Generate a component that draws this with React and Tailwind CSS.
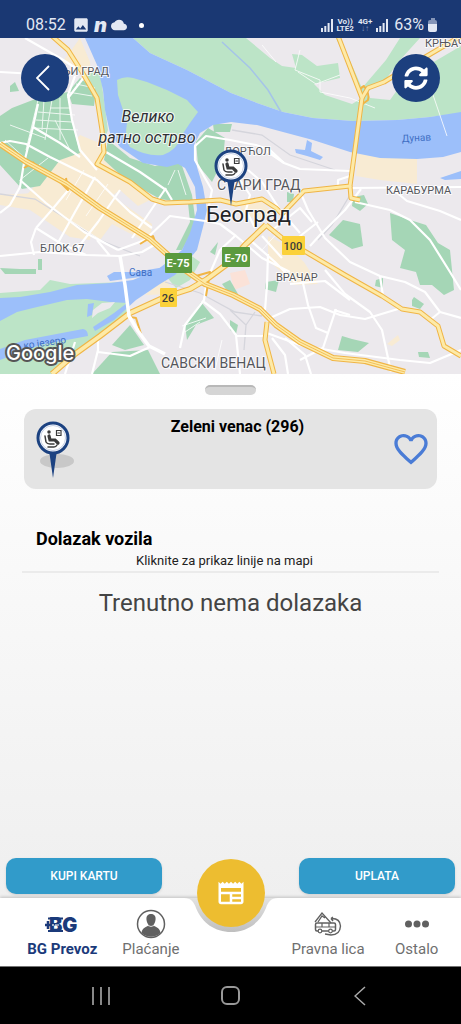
import React, { useState } from "react";
import { FaSyncAlt } from "react-icons/fa";
import { MdCloud, MdFavorite, MdFavoriteBorder, MdImage, MdNewspaper } from "react-icons/md";

const streets = [
  "M38 104 L33 127 L24 163 L20 187 L10 205 L0 213 M75 76 L68 95 L72 120 L80 150 L97 170",
  "M0 72 L35 74 M25 38 L60 58 L82 72 M85 76 L68 98",
  "M0 143 L10 141 L26 144 L50 157 L97 180 L130 212 L152 228",
  "M20 180 L46 203 L84 232 L118 250 M33 127 L60 143 L80 157",
  "M106 152 L140 172 L166 190 L172 200 M166 188 L147 216 L132 238 M118 250 L145 240 L170 216 L205 221",
  "M95 177 L75 212 L54 250 M120 190 L98 222 L76 250 M70 188 L50 212 L36 228 M36 228 L31 242 L34 255",
  "M0 256 L40 252 L86 255 L120 256 L142 252 L156 244 M36 228 L60 243 L86 255 M97 240 L110 256",
  "M98 336 L98 352 L130 356 L150 347 M98 350 L92 374 M75 342 L65 374",
  "M180 348 L185 325 L204 300 L207 280 L220 250 L235 236 M204 302 L220 314 L236 335 L240 374",
  "M209 205 L212 190 L205 178 L195 160 L195 146 L206 136 L230 140 L256 145 L270 150 L284 163 L300 169 L350 171",
  "M248 170 L262 182 L280 210 L300 233 M265 150 L284 163",
  "M302 196 L308 210 L325 238 L350 262 L380 276",
  "M361 189 L345 210 L320 235 L310 246 M338 188 L338 180 L350 176",
  "M240 180 L250 195 L246 210 L255 228 M270 232 L300 208 L312 222 M290 244 L318 222",
  "M205 221 L220 224 L236 236 L262 258 L290 272 M250 240 L275 262 L295 282 M262 236 L282 258",
  "M355 202 L390 210 L410 220 L430 240 L450 272 L461 290",
  "M350 188 L461 187 M390 187 L407 201 L440 211 L461 220",
  "M268 254 L267 285 L265 310 M380 276 L383 296 M380 276 L405 282 L425 292 L440 312 L461 318",
  "M440 312 L430 320 M325 270 L345 294 L370 312 L382 330 L391 372",
  "M270 318 L290 309 L320 307 L340 315 L365 319 L398 309",
  "M303 283 L308 305 L316 328 L328 333 M336 309 L323 348 L300 360 M334 310 L350 315",
  "M264 332 L300 345 L345 353 L400 360 L430 363 L461 350",
  "M272 338 L285 355 L288 374 M285 338 L305 355 L311 374 M236 336 L264 336",
  "M290 284 L325 281 L350 300",
];

const alleys = [
  "M10 125 L45 138 M5 140 L38 170 M38 100 L26 150 M52 100 L45 140 M60 98 L60 140 M38 112 L75 115 M33 128 L78 130",
  "M44 100 L42 130 M68 92 L92 96 M76 84 L95 88 M50 108 L70 108 M36 120 L72 122",
  "M55 120 L70 150 M48 158 L20 180 M300 50 L295 70 L320 80 L320 92 L350 98 M350 98 L375 108",
  "M298 72 L316 84 L340 75 M262 45 L276 62 M84 170 L66 200 M108 184 L86 216",
  "M62 215 L110 246 M78 194 L136 232 M430 86 L447 136 M175 170 L168 185 M178 170 L186 195",
  "M182 326 L206 318 M185 332 L200 322 M222 340 L215 370 M280 230 L262 250",
];

const bridge = "M120 256 L125 285 L129 316 L138 331 L149 346 L165 354";

const highways = [
  "M0 144 L25 161 L67 184 L100 208 L150 239 L185 270 L205 284 L233 295 L260 309 L276 325 L300 342 L333 358 L365 361 L405 372",
  "M52 374 L75 354 L100 336 L130 313 L165 297 L190 289 L207 279 L230 262 L245 245 L266 225",
];

const mainRoads = [
  "M52 36 L68 50 L82 72 L97 98 L102 130 L104 152 L97 164 L130 182 L152 199 L165 203 L190 202 L220 200 L236 204 L262 199 L276 208 L282 214",
  "M282 214 L304 191 L350 186 L362 98 L338 36",
  "M362 98 L368 88 L384 82 L410 66 L461 36",
  "M350 186 L351 198 L360 200",
  "M266 225 L282 238 L306 252 L345 275 L382 296 L402 309 L420 312 L438 326 L444 346 L461 356",
  "M267 322 L265 340 L274 374",
];

const parks = [
  "M0 116 L12 108 L38 98 L68 92 L74 130 L80 153 L60 160 L40 186 L22 189 L0 165Z",
  "M68 92 L80 78 L96 90 L94 106 L72 104Z",
  "M108 140 L130 158 L155 166 L180 160 L192 195 L196 225 L182 250 L176 250 L190 222 L188 203 L160 199 L126 180 L104 160Z",
  "M196 142 L208 128 L225 138 L223 160 L212 182 L198 165Z",
  "M213 124 L232 124 L230 132 L214 132Z",
  "M353 197 L364 195 L368 204 L360 211 L352 206Z",
  "M329 235 L343 220 L360 224 L363 246 L352 249Z",
  "M390 213 L410 220 L426 225 L438 243 L450 250 L454 290 L444 295 L432 285 L420 285 L416 272 L400 268 L405 250 L392 240Z",
  "M338 350 L342 336 L352 339 L369 343 L358 352Z",
  "M412 300 L414 297 L424 304 L420 309 L412 306Z",
  "M112 345 L130 325 L144 345 L125 350Z",
  "M112 352 L148 350 L160 374 L92 374Z",
  "M185 325 L201 302 L214 318 L196 325 L187 340Z",
  "M266 282 L279 280 L276 292 L265 289Z",
  "M287 192 L294 194 L293 202 L287 202Z",
  "M418 352 L428 352 L430 358 L419 357Z",
  "M376 280 L383 278 L383 288 L375 286Z",
  "M0 268 L20 269 L36 269 L36 274 L5 274Z",
  "M38 259 L42 259 L42 270 L38 270Z",
  "M10 86 L15 82 L19 91 L10 92Z",
  "M210 252 L218 242 L215 255Z",
  "M222 284 L230 280 L238 294 L228 292Z",
  "M230 320 L238 325 L236 334 L230 330Z",
];

const PinShape = () => (
  <>
    <path d="M-4 12 L4 12 L0 40Z" fill="#1c4281" />
    <circle r="15" fill="#fff" stroke="#1c4281" strokeWidth="3" />
    <circle r="12.500" fill="#fff" stroke="#c5d0e6" strokeWidth="1" />
    <g fill="none" stroke="#3b3b3b" strokeWidth="2" strokeLinecap="round">
      <circle cx="-4" cy="-6" r="1" fill="#3b3b3b" strokeWidth="1.500" />
      <path d="M-4 -2 L-3 2 L2 2 L5 5" strokeWidth="3.200" />
      <path d="M-8 -2 L-7 4 Q-6 6 -3 6 L1 6" strokeWidth="1.500" />
      <path d="M-5 9 L1 9 Q3 9 4 7" strokeWidth="1.500" />
      <path d="M3.500 -7.500 H8 V-2.500 H3.500Z M5 -5 H6.500" strokeWidth="1.200" />
    </g>
  </>
);

const CityMap = () => (
  <svg
    viewBox="0 38 461 336"
    className="block w-full font-[Roboto,sans-serif]"
    role="img"
    aria-label="Mapa Beograda"
  >
    <rect y="38" width="461" height="336" fill="#ece9ed" />

    {/* Built-up districts */}
    <g fill="#f8ebd3">
      <path d="M80 135 L104 145 L104 160 L150 200 L138 206 L120 190 L112 196 L152 224 L150 244 L112 224 L100 240 L70 225 L50 212 L22 200 L40 180 L62 155Z" />
      <path d="M80 38 L90 62 L92 85 L84 70 L62 62 L70 52Z" />
      <path d="M118 177 L130 170 L139 186 L136 192Z" />
      <path d="M358 154 L417 158 L417 184 L380 180 L356 176Z" />
      <path d="M0 195 L35 193 L75 218 L92 228 L90 240 L70 237 L30 210 L0 205Z" />
      <path d="M240 203 L258 198 L272 212 L260 220 L242 214Z M268 236 L284 244 L304 262 L318 284 L295 285 L268 260Z" />
      <path d="M387 344 L398 335 L400 340 L392 346Z M145 295 L165 278 L175 294Z" />
      <path d="M230 273 L245 270 L250 284 L234 290Z" fill="#fbe2d8" />
    </g>

    {/* River banks and the Danube side */}
    <g fill="#bce4c7">
      <path d="M133 38 H461 V113 L430 117 L397 120 L353 121 L313 118 L283 112 L257 103 L231 93 L187 70 L150 53Z" />
      <path d="M0 293 L40 290 L50 280 L70 284 L126 282 L129 312 L90 340 L52 374 L0 374Z" />
      <path d="M85 75 L100 70 L108 130 L104 140 L98 98Z" />
      <path d="M165 275 L186 252 L200 262 L190 280 L176 288Z" />
    </g>
    <path
      d="M246 38 L336 38 L352 75 L362 98 L352 104 L325 95 L314 84 L340 78 L338 63 L317 66 L302 55 L292 54 L296 68 L282 66 L270 58Z M340 38 L400 38 L386 60 L362 88Z M420 38 L461 38 L461 46 L420 70 L400 86 L390 100 L370 98 L366 90 L384 82 L400 60Z"
      fill="#ece9ed"
    />
    {parks.map((d) => (
      <path key={d} d={d} fill="#a5d6b6" />
    ))}

    {/* Rivers */}
    <g fill="#9cbffa">
      <path d="M85 38 L133 38 L150 53 L187 70 L231 93 L257 103 L283 112 L313 118 L353 121 L397 120 L430 117 L461 112 V152 L443 157 L417 159 L380 158 L350 152 L313 140 L283 132 L257 125 L231 122 L213 125 L200 133 L194 145 L197 167 L203 187 L207 210 L203 227 L197 250 L187 262 L175 275 L160 284 L136 300 L114 320 L95 331 L93 327 L114 313 L127 303 L110 302 L87 299 L67 300 L33 308 L17 312 L0 321 V298 L20 297 L50 292 L77 285 L110 283 L133 280 L157 270 L170 260 L182 250 L190 233 L197 210 L195 187 L185 168 L178 164 L167 167 L143 163 L120 147 L110 133 L105 110 L103 90 L97 65Z" />
      <path d="M0 349 L25 340 L83 329 Q88 330 88 336 L40 345 L0 360Z" />
      <path d="M107 276 L114 272 L135 272 L165 267 L165 274 L140 277 L110 281Z" />
      <path d="M295 149 L305 150 L307 140 L312 143 L311 151 L323 157 L320 160 L307 156 L296 153Z" />
      <path d="M440 178 L455 173 L461 171 V179 L445 180Z M88 304 L94 303 L92 315 L87 317Z" />
    </g>
    <path
      d="M117 80 Q124 76 133 78 L147 82 L167 90 L187 100 L198 112 L190 123 L180 138 Q177 150 163 155 Q147 157 130 147 Q124 139 127 123 L123 110 L118 95Z"
      fill="#bce4c7"
    />
    <path d="M93 310 L102 303 L115 302 L110 308 L98 313 L92 318Z" fill="#ece9ed" />
    <path d="M222 42 L250 68 L268 90 L281 112" fill="none" stroke="#a5c4e8" strokeWidth="1.500" />

    {/* Railways and side streets */}
    <g fill="none" stroke="#d5d5dc" strokeWidth="1.300">
      <path d="M0 194 L35 199 L100 240 L140 256 M232 130 L262 135 L290 155 L335 170 M350 195 L332 225 L318 240" />
      <path d="M165 282 L200 293 L235 312 L262 316 M230 310 L246 325 L244 350 M246 325 L255 312" />
    </g>
    <g fill="none" stroke="#fff" strokeWidth="1" opacity="0.800">
      {alleys.map((d) => (
        <path key={d} d={d} />
      ))}
    </g>
    <g fill="none" stroke="#fff" strokeWidth="2.200" strokeLinejoin="round">
      {streets.map((d) => (
        <path key={d} d={d} />
      ))}
    </g>

    {/* Main roads */}
    <g fill="none" strokeLinejoin="round">
      <g stroke="#f0b545">
        {mainRoads.map((d) => (
          <path key={d} d={d} strokeWidth="5" />
        ))}
        {highways.map((d) => (
          <path key={d} d={d} strokeWidth="6" />
        ))}
        <path d="M362 98 Q356 90 364 86 Q370 94 368 100 L360 106" strokeWidth="2" />
        <path d="M58 180 L68 190 L66 178 M24 168 L34 162 M140 244 L153 236 L156 244" strokeWidth="2" />
        <path d="M125 316 L136 318 L141 334 M196 276 L210 272 L206 296" strokeWidth="2" />
      </g>
      <g stroke="#fdeaa8">
        {mainRoads.map((d) => (
          <path key={d} d={d} strokeWidth="3" />
        ))}
        {highways.map((d) => (
          <path key={d} d={d} strokeWidth="3.800" />
        ))}
      </g>
      <path d={highways[0]} stroke="#f0b545" strokeWidth="0.800" />
      <path d={bridge} stroke="#fff" strokeWidth="3.500" />
    </g>

    {/* Road shields */}
    <g fontSize="12" fontWeight="700" textAnchor="middle">
      <rect x="165" y="253" width="27" height="20" rx="1" fill="#5b9a3f" />
      <text x="178" y="267" fill="#fff" fontSize="11">E-75</text>
      <rect x="222" y="247" width="28" height="20" rx="1" fill="#5b9a3f" />
      <text x="236" y="262" fill="#fff" fontSize="11">E-70</text>
      <rect x="282" y="236" width="23" height="19" rx="1" fill="#fbd13a" />
      <text x="293" y="250" fill="#3c3c3c" fontSize="11" fontWeight="500">100</text>
      <rect x="160" y="288" width="17" height="19" rx="1" fill="#fbd13a" />
      <text x="168" y="302" fill="#3c3c3c" fontSize="11" fontWeight="500">26</text>
    </g>

    {/* Place names */}
    <g
      fill="#55565b"
      stroke="#fff"
      strokeWidth="2"
      strokeOpacity="0.800"
      strokeLinejoin="round"
      paintOrder="stroke"
      fontSize="11"
    >
      <text x="109" y="75" textAnchor="end">ГОРЊИ ГРАД</text>
      <text x="425" y="47">КРЊАЧ</text>
      <text x="224" y="155">ДОРЋОЛ</text>
      <text x="386" y="194">КАРАБУРМА</text>
      <text x="40" y="252">БЛОК 67</text>
      <text x="276" y="281">ВРАЧАР</text>
      <text x="217" y="190" fontSize="14">СТАРИ ГРАД</text>
      <text x="161" y="368" fontSize="14">САВСКИ ВЕНАЦ</text>
      <g fill="#2f3034" fontSize="16" fontStyle="italic" textAnchor="middle">
        <text x="148" y="122">Велико</text>
        <text x="147" y="143">ратно острво</text>
      </g>
      <text x="206" y="222" fontSize="22" fill="#242528">Београд</text>
    </g>
    <g fill="#3f6fc4" fontSize="10">
      <text x="402" y="142" transform="rotate(-3 402 142)">Дунав</text>
      <text x="129" y="276">Сава</text>
      <text x="24" y="349" transform="rotate(-8 24 349)">ко језеро</text>
    </g>
    <text
      x="6"
      y="360"
      fontSize="20"
      fontWeight="500"
      fontFamily="Inter, sans-serif"
      fill="#fff"
      stroke="#555"
      strokeWidth="4"
      strokeLinejoin="round"
      paintOrder="stroke"
    >
      Google
    </text>

    <g transform="translate(231 166)">
      <PinShape />
    </g>
  </svg>
);

const Signal = () => (
  <svg viewBox="0 0 12 13" className="h-[13px] w-3" aria-hidden="true">
    <path d="M1 13 V9 M4.300 13 V7 M7.600 13 V4 M11 13 V0" stroke="#e3e8f3" strokeWidth="2" />
  </svg>
);

const StatusBar = () => (
  <header className="flex h-[38px] items-center justify-between bg-[#1a3873] pl-[26px] pr-6 pt-3 text-[#e3e8f3]">
    <div className="flex items-center">
      <span className="w-[46px] text-base">08:52</span>
      <MdImage className="h-[18px] w-[18px]" />
      <span className="mx-1 font-[Inter,sans-serif] text-xl/4 font-black italic">n</span>
      <MdCloud className="h-4 w-4" />
      <span className="ml-3 h-[5px] w-[5px] rounded-full bg-white" />
    </div>
    <div className="flex items-center">
      <Signal />
      <span className="ml-[3px] flex flex-col text-center text-[8px]/[7px] font-bold">
        <span>Vo))</span>
        <span>LTE2</span>
      </span>
      <span className="mx-1 flex flex-col text-center text-[8px]/[7px] font-bold">
        <span>4G+</span>
        <span className="text-[#8092ba]">↓↑</span>
      </span>
      <Signal />
      <span className="ml-1.5 text-base">63%</span>
      <span className="ml-1 flex flex-col items-center" aria-hidden="true">
        <span className="h-0.5 w-1 bg-[#8595b8]" />
        <span className="h-1 w-[9px] rounded-t-xs bg-[#8595b8]" />
        <span className="h-2 w-[9px] rounded-b-xs bg-[#e3e8f3]" />
      </span>
    </div>
  </header>
);

const BgLogo = () => (
  <svg viewBox="0 0 34 20" className="h-5 w-[34px]" aria-hidden="true">
    <text
      x="4"
      y="18"
      fill="#1b3a7a"
      fontFamily="Inter, sans-serif"
      fontWeight="900"
      fontSize="20"
    >
      BG
    </text>
    <path d="M0 11 H7 M3 7 V15" stroke="#1b3a7a" strokeWidth="2.500" />
    <path d="M3 4.500 H18 M3 17 H18" stroke="#1b3a7a" strokeWidth="2" />
    <path d="M8 10 V12 M10 11 H14" stroke="#fff" strokeWidth="1.200" />
  </svg>
);

const UserIcon = () => (
  <svg viewBox="0 0 30 30" className="h-[30px] w-[30px]" aria-hidden="true">
    <circle cx="15" cy="15" r="13.500" fill="none" stroke="#606060" strokeWidth="1.500" />
    <path
      d="M15 5 C18.500 5 20 7.500 19.500 11 C19 14 18 15 17.500 16 C18 18 24 18 24.500 24 C19 29 11 29 5.500 24 C6 18 12 18 12.500 16 C12 15 11 14 10.500 11 C10 7.500 11.500 5 15 5Z"
      fill="#606060"
    />
    <path d="M12 16.500 Q15 18.500 18 16.500" fill="none" stroke="#fff" strokeWidth="0.800" />
  </svg>
);

const VehiclesIcon = () => (
  <svg viewBox="0 0 28 24" className="h-6 w-7" fill="none" stroke="#606060" aria-hidden="true">
    <path d="M1 10 L8 1 L17 11 M4 10 L8 4 L11 6" strokeWidth="1.300" />
    <rect x="1.500" y="11" width="20" height="8" rx="1.500" strokeWidth="1.500" />
    <path d="M2 15 H21 M8 11 V15 M15 11 V15" strokeWidth="1.200" />
    <circle cx="6" cy="19" r="1.800" fill="#fff" strokeWidth="1.200" />
    <circle cx="16.500" cy="19" r="1.800" fill="#fff" strokeWidth="1.200" />
    <path d="M17 6.500 Q26 6 26.500 14 Q26 23 17 23 L11 22 M17 6.500 L19 5 M17 6.500 L19 9" strokeWidth="1.400" />
  </svg>
);

const DotsIcon = () => (
  <svg viewBox="0 0 26 8" className="h-2 w-[26px]" fill="#606060" aria-hidden="true">
    <circle cx="4.500" cy="4" r="3.500" />
    <circle cx="13" cy="4" r="3.500" />
    <circle cx="21.500" cy="4" r="3.500" />
  </svg>
);

const tabs = [
  { id: "prevoz", label: "BG Prevoz", icon: BgLogo },
  { id: "placanje", label: "Plaćanje", icon: UserIcon },
  { id: "pravna", label: "Pravna lica", icon: VehiclesIcon },
  { id: "ostalo", label: "Ostalo", icon: DotsIcon },
];

const BottomNav = () => {
  const [active, setActive] = useState("prevoz");

  return (
    <nav className="relative grid h-[68px] grid-cols-5 bg-white pl-[18px] shadow-[0_-1px_3px_rgba(0,0,0,0.2)]">
      {/* Notch under the round button */}
      <svg
        viewBox="0 0 94 40"
        className="absolute left-1/2 top-0 h-10 w-[94px] -translate-x-1/2"
        aria-hidden="true"
      >
        <defs>
          <linearGradient id="notch" x1="0" y1="0" x2="0" y2="1">
            <stop offset="0" stopColor="#e6e6e6" />
            <stop offset="1" stopColor="#bfbfbf" />
          </linearGradient>
        </defs>
        <path
          d="M0 -4 V0 C7 0 10 4 12 10 C18 25 31 34 47 34 C63 34 76 25 82 10 C84 4 87 0 94 0 V-4Z"
          fill="url(#notch)"
        />
      </svg>
      {tabs.map(({ id, label, icon: Icon }, index) => (
        <button
          key={id}
          onClick={() => setActive(id)}
          className={`flex flex-col items-center whitespace-nowrap pt-2.5 text-[15px]/5 ${
            index === 2 ? "col-start-4" : ""
          } ${active === id ? "font-bold text-[#1b3a7a]" : "text-[#6f6f6f]"}`}
        >
          <span className="flex h-[31px] items-center">
            <Icon />
          </span>
          {label}
        </button>
      ))}
      <button
        aria-label="Vesti"
        className="absolute -top-[39px] left-1/2 flex h-[68px] w-[68px] -translate-x-1/2 items-center justify-center rounded-full bg-[#edbd30] text-white"
      >
        <MdNewspaper className="h-[30px] w-[30px]" />
      </button>
    </nav>
  );
};

const SystemNav = () => (
  <div className="flex h-[58px] items-center justify-between border-t border-[#777] bg-black px-[85px]">
    <button aria-label="Recent apps" className="flex w-8 justify-center gap-[6px]">
      <span className="h-[18px] w-0.5 bg-[#888]" />
      <span className="h-[18px] w-0.5 bg-[#888]" />
      <span className="h-[18px] w-0.5 bg-[#888]" />
    </button>
    <button aria-label="Home" className="h-[19px] w-[19px] rounded-md border-2 border-[#999]" />
    <button aria-label="Back" className="flex w-8 justify-center">
      <svg viewBox="0 0 12 20" className="h-5 w-3" aria-hidden="true">
        <path d="M11 1 L1 10 L11 19" fill="none" stroke="#aaa" strokeWidth="1.500" />
      </svg>
    </button>
  </div>
);

const App = () => {
  const [favorite, setFavorite] = useState(false);
  const Heart = favorite ? MdFavorite : MdFavoriteBorder;

  return (
    <div className="flex min-h-screen flex-col font-[Roboto,sans-serif]">
      <StatusBar />

      <div className="relative">
        <CityMap />
        <button
          aria-label="Nazad"
          className="absolute left-[21px] top-4 flex h-12 w-12 items-center justify-center rounded-full bg-[#1c3f7e]"
        >
          <svg viewBox="0 0 14 26" className="mr-1 h-[26px] w-3.5" aria-hidden="true">
            <path d="M13 1 L1 13 L13 25" fill="none" stroke="#fff" strokeWidth="1.800" />
          </svg>
        </button>
        <button
          aria-label="Osveži"
          className="absolute right-[21px] top-4 flex h-12 w-12 items-center justify-center rounded-full bg-[#1c3f7e] text-white"
        >
          <FaSyncAlt className="h-6 w-6" />
        </button>
      </div>

      <main className="flex flex-1 flex-col bg-linear-to-b from-white to-[#efefef]">
        <div className="mx-auto mt-[11px] h-2.5 w-[51px] rounded-full border-t-2 border-[#b8b8b8] bg-[#d5d5d5]" />

        <section className="mx-6 mt-3.5 grid h-20 grid-cols-[60px_1fr_46px] rounded-xl bg-[#e4e4e4]">
          <svg viewBox="0 0 60 80" className="h-20 w-[60px]" aria-hidden="true">
            <ellipse cx="33" cy="52" rx="17" ry="7" fill="#c8c8c8" />
            <g transform="translate(29 29)">
              <PinShape />
            </g>
          </svg>
          <h1 className="pt-1.5 text-center text-base font-bold">Zeleni venac (296)</h1>
          <button
            aria-label="Omiljeno stajalište"
            onClick={() => setFavorite(!favorite)}
            className="flex items-center text-[#4a7cd6]"
          >
            <Heart className="h-10 w-10" />
          </button>
        </section>

        <h2 className="mt-9 pl-9 text-lg/7 font-bold">Dolazak vozila</h2>
        <div className="mx-[22px] border-b-2 border-[#ebebeb] pr-3 text-center text-[13px]/4 text-[#222]">
          <p className="pb-0.5">Kliknite za prikaz linije na mapi</p>
        </div>
        <p className="mt-3.5 text-center text-2xl text-[#444]">Trenutno nema dolazaka</p>

        <div className="mt-auto grid grid-cols-[1fr_137px_1fr] px-1.5 pb-1 text-xs font-medium text-white">
          <button className="h-9 rounded-[10px] bg-[#319bca] shadow-sm">KUPI KARTU</button>
          <button className="col-start-3 h-9 rounded-[10px] bg-[#319bca] shadow-sm">UPLATA</button>
        </div>
      </main>

      <BottomNav />
      <SystemNav />
    </div>
  );
};

export default App;
